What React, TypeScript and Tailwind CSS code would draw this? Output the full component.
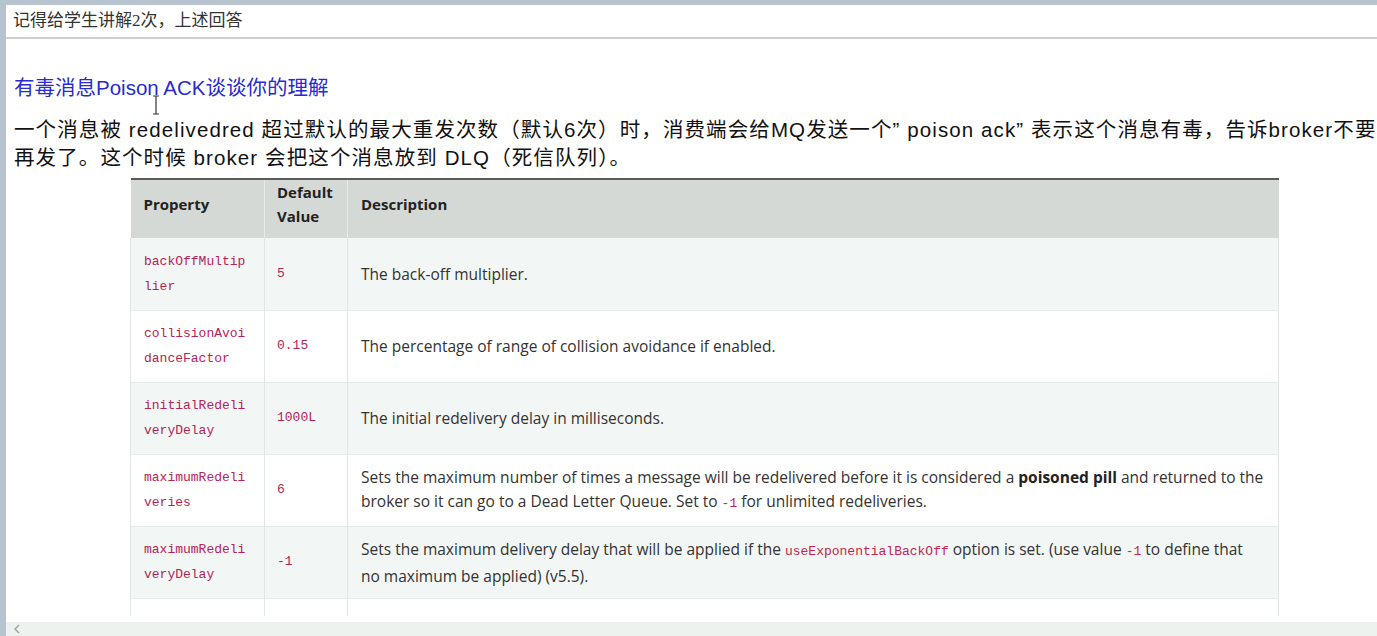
import React from 'react';

type Row = {
    prop: string[];
    def: string;
    desc: React.ReactNode;
    shaded: boolean;
};

const Code: React.FC<{ children: React.ReactNode }> = ({ children }) => (
    <code className="font-['Liberation_Mono',monospace] text-[13px] text-[#c7254e]">{children}</code>
);

const rows: Row[] = [
    { prop: ['backOffMultip', 'lier'], def: '5', desc: <>The back-off multiplier.</>, shaded: true },
    {
        prop: ['collisionAvoi', 'danceFactor'],
        def: '0.15',
        desc: <>The percentage of range of collision avoidance if enabled.</>,
        shaded: false,
    },
    {
        prop: ['initialRedeli', 'veryDelay'],
        def: '1000L',
        desc: <>The initial redelivery delay in milliseconds.</>,
        shaded: true,
    },
    {
        prop: ['maximumRedeli', 'veries'],
        def: '6',
        desc: (
            <>
                Sets the maximum number of times a message will be redelivered before it is considered a <b className="font-bold text-[#222]">poisoned pill</b> and returned to the
                <br />
                broker so it can go to a Dead Letter Queue. Set to <Code>-1</Code> for unlimited redeliveries.
            </>
        ),
        shaded: false,
    },
    {
        prop: ['maximumRedeli', 'veryDelay'],
        def: '-1',
        desc: (
            <>
                Sets the maximum delivery delay that will be applied if the <Code>useExponentialBackOff</Code> option is set. (use value <Code>-1</Code> to define that
                <br />
                no maximum be applied) (v5.5).
            </>
        ),
        shaded: true,
    },
    { prop: [''], def: '', desc: <></>, shaded: false },
];

const App: React.FC = () => {
    return (
        <div className="flex h-[636px] w-[1377px] flex-col overflow-hidden bg-[#b7c3cf]">
            {/* top window strip */}
            <div className="h-[5px] shrink-0" />
            <div className="flex min-h-0 flex-1">
                <div className="w-[6px] shrink-0" />
                <div className="flex min-w-0 flex-1 flex-col bg-white">
                    {/* note bar */}
                    <div className="flex h-[34px] shrink-0 items-center border-b-2 border-[#cfcfcc] pl-[7px] font-['Liberation_Serif','Noto_Sans_CJK_SC',serif] text-[17px] text-[#333]">
                        记得给学生讲解2次，上述回答
                    </div>

                    {/* document */}
                    <div className="relative h-[577px] shrink-0 overflow-hidden pt-[35px] pl-[8px]">
                        <h2 className="font-['Liberation_Sans','Noto_Sans_CJK_SC',sans-serif] text-[20.5px] leading-[28px] text-[#2a2ad0]">
                            有毒消息Poison ACK谈谈你的理解
                        </h2>
                        <div className="mt-[14px] font-['Liberation_Sans','Noto_Sans_CJK_SC',sans-serif] text-[20.5px] leading-[28px] tracking-[1.1px] whitespace-nowrap text-[#111]">
                            <p>一个消息被 redelivedred 超过默认的最大重发次数（默认6次）时，消费端会给MQ发送一个” poison ack” 表示这个消息有毒，告诉broker不要</p>
                            <p>再发了。这个时候 broker 会把这个消息放到 DLQ（死信队列）。</p>
                        </div>

                        <table className="mt-[6px] ml-[116px] w-[1149px] table-fixed border-collapse font-['Open_Sans',sans-serif] text-[15.5px] leading-[24px] text-[#333]">
                            <colgroup>
                                <col className="w-[134px]" />
                                <col className="w-[83px]" />
                                <col />
                            </colgroup>
                            <thead>
                                <tr className="h-[59px] border-t-2 border-[#5a5a5a] bg-[#d5d9d5] text-left text-[15px] font-bold text-[#222]">
                                    <th className="border-r border-[#e6ebe9] px-[13px] pb-[10px] align-middle">Property</th>
                                    <th className="border-r border-[#e6ebe9] px-[12px] pb-[10px] align-middle leading-[24px]">
                                        Default
                                        <br />
                                        Value
                                    </th>
                                    <th className="px-[13px] pb-[10px] align-middle">Description</th>
                                </tr>
                            </thead>
                            <tbody>
                                {rows.map((row, i) => (
                                    <tr key={i} className={`h-[72px] border-b border-[#e2ebe9] ${row.shaded ? 'bg-[#f2f6f5]' : 'bg-white'}`}>
                                        <td className="border-r border-l border-[#dfe6e4] px-[13px] align-middle font-['Liberation_Mono',monospace] text-[13px] leading-[25px] text-[#b3245a]">
                                            {row.prop.map((p, j) => (
                                                <div key={j}>{p}</div>
                                            ))}
                                        </td>
                                        <td className="border-r border-[#dfe6e4] px-[12px] align-middle font-['Liberation_Mono',monospace] text-[13px] text-[#b3245a]">
                                            {row.def}
                                        </td>
                                        <td className="border-r border-[#dfe6e4] px-[13px] align-middle whitespace-nowrap">{row.desc}</td>
                                    </tr>
                                ))}
                            </tbody>
                        </table>

                        {/* text cursor */}
                        <svg className="absolute top-[56px] left-[145px]" width="10" height="20" viewBox="0 0 10 20">
                            <path d="M2 1h6M5 1v18M2 19h6" stroke="#333" strokeWidth="1.2" fill="none" />
                        </svg>
                    </div>

                    {/* horizontal scrollbar */}
                    <div className="mt-auto flex h-[14px] shrink-0 items-center bg-[#eef2ee] pl-[7px]">
                        <svg width="8" height="10" viewBox="0 0 8 10">
                            <path d="M6 1 2 5l4 4" stroke="#9aa09a" strokeWidth="1.4" fill="none" />
                        </svg>
                    </div>
                </div>
            </div>
        </div>
    );
};

export default App;
